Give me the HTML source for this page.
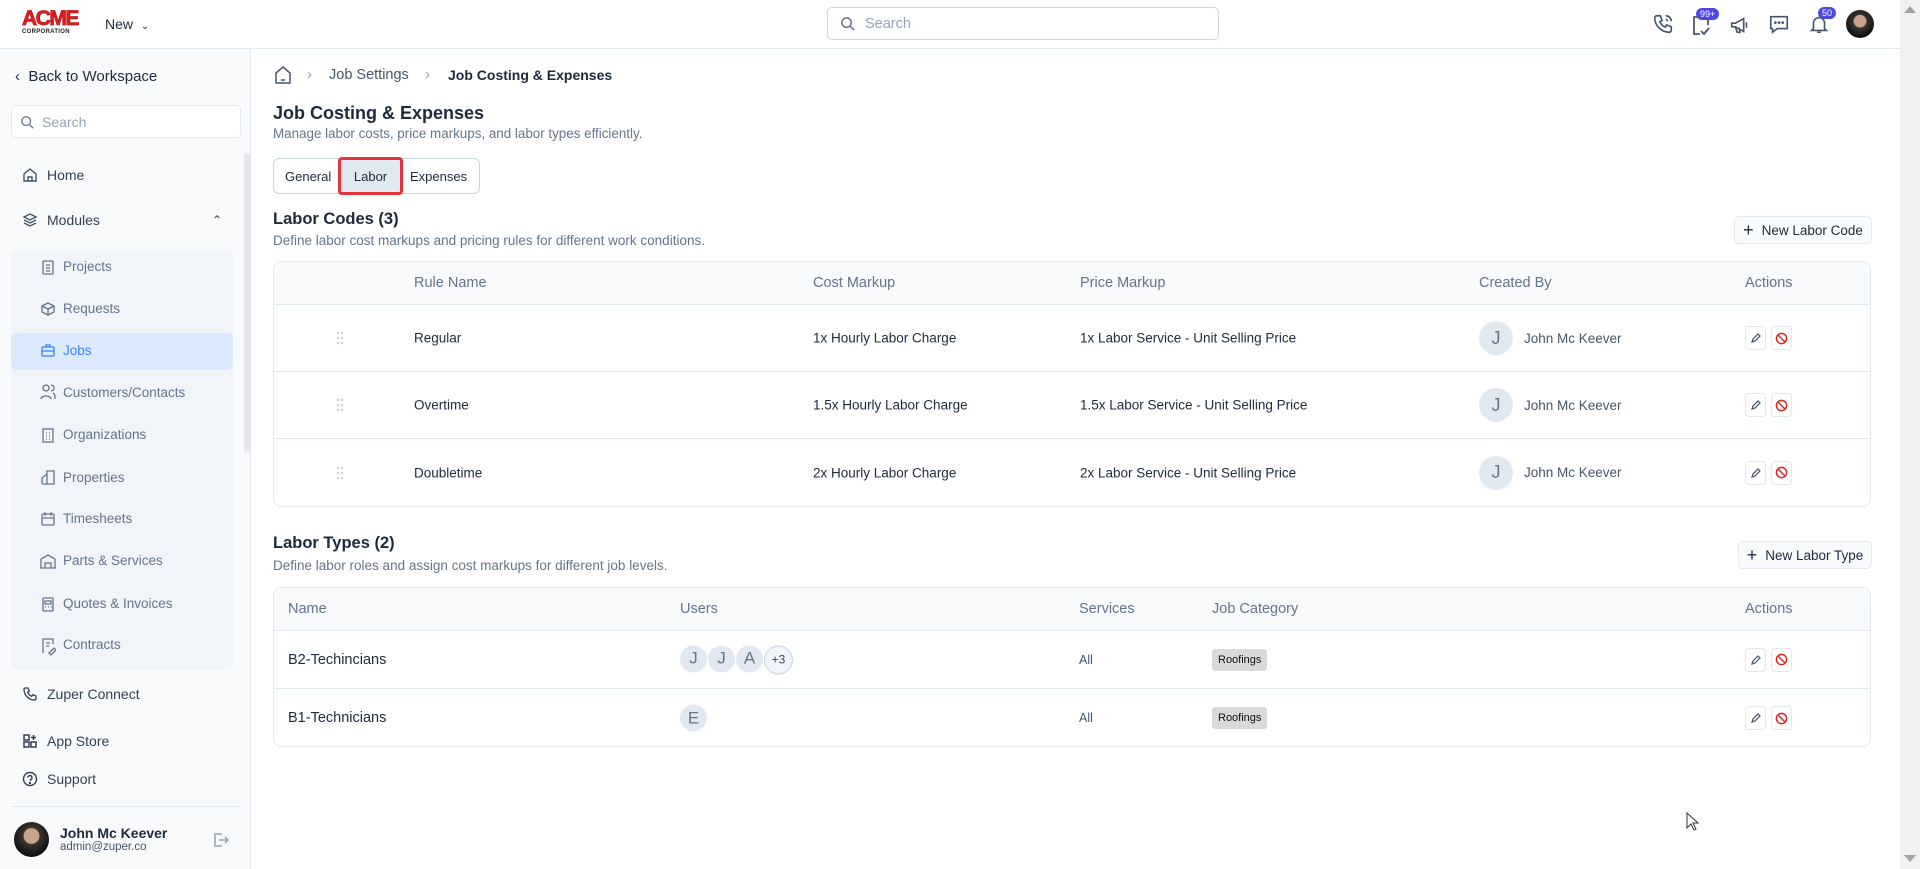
<!DOCTYPE html>
<html><head><meta charset="utf-8"><style>
*{box-sizing:border-box;margin:0;padding:0}
body{width:1920px;height:869px;overflow:hidden;font-family:"Liberation Sans",sans-serif;background:#fff;color:#1e293b;position:relative}
.a{position:absolute}
.top{left:0;top:0;width:1900px;height:49px;background:#fff;border-bottom:1px solid #e2e8f0}
.side{left:0;top:49px;width:251px;height:820px;background:#f8fafc;border-right:1px solid #e2e8f0}
.si{position:absolute;left:0;font-size:14px;color:#334155;display:flex;align-items:center}
.sub{position:absolute;font-size:13.5px;color:#64748b;left:63px}
svg{display:block}
.muted{color:#64748b}
.tbl{position:absolute;left:273px;width:1598px;border:1px solid #e2e8f0;border-radius:8px;overflow:hidden;background:#fff}
.th{background:#f8fafc;border-bottom:1px solid #e2e8f0;position:relative;color:#64748b;font-size:14.5px}
.tr{position:relative;border-bottom:1px solid #e2e8f0;font-size:13.5px;color:#1e293b}
.tr:last-child{border-bottom:none}
.c{position:absolute;top:50%;transform:translateY(-50%);white-space:nowrap}
.av{width:34px;height:34px;border-radius:50%;background:#e2e8f0;color:#64748b;font-size:18px;display:inline-flex;align-items:center;justify-content:center}
.ab{width:21px;height:24px;border:1px solid #e2e8f0;border-radius:4px;display:inline-flex;align-items:center;justify-content:center;background:#fff;margin-right:5px}
.btn{position:absolute;border:1px solid #e2e8f0;border-radius:5px;background:#f8fafc;font-size:13.5px;color:#1e293b;display:flex;align-items:center;justify-content:center;gap:8px}
.tag{background:#d9d9d9;border-radius:3px;padding:5px 6px;font-size:11px;color:#111}
</style></head><body>
<div class="a top"></div>
<div class="a" style="left:22px;top:9px;font:900 21px 'Liberation Sans';color:#e11d1d;letter-spacing:-1.5px;line-height:20px;-webkit-text-stroke:.8px #b91c1c">ACME</div>
<div class="a" style="left:22px;top:29px;font:bold 6px 'Liberation Sans';color:#222;letter-spacing:.3px">CORPORATION</div>
<div class="a" style="left:105px;top:16px;font-size:14px;color:#1e293b">New &nbsp;<span style="font-size:10px">&#8964;</span></div>
<div class="a" style="left:827px;top:7px;width:392px;height:33px;border:1px solid #cbd5e1;border-radius:5px;display:flex;align-items:center;padding-left:12px;gap:10px;color:#94a3b8;font-size:14.5px">
<svg width="15" height="15" viewBox="0 0 16 16" fill="none" stroke="#64748b" stroke-width="1.6"><circle cx="7" cy="7" r="5"/><path d="M11 11l4 4"/></svg>Search</div>
<svg class="a" style="left:1652px;top:13px" width="22" height="22" viewBox="0 0 24 24" fill="none" stroke="#475569" stroke-width="1.8"><path d="M5 3h4l2 5-2.5 1.5a11 11 0 0 0 6 6L16 13l5 2v4a2 2 0 0 1-2 2A16 16 0 0 1 3 5a2 2 0 0 1 2-2z"/><path d="M15 3a6 6 0 0 1 6 6M15 7a2 2 0 0 1 2 2"/></svg>
<svg class="a" style="left:1691px;top:14px" width="20" height="22" viewBox="0 0 20 22" fill="none" stroke="#475569" stroke-width="1.8"><path d="M6 3H3v17h6M14 3h3v8"/><path d="M10 17l3 3 5-6"/></svg>
<div class="a" style="left:1696px;top:8px;background:#4f46e5;color:#fff;font-size:9px;border-radius:8px;padding:1px 4px">99+</div>
<svg class="a" style="left:1729px;top:14px" width="22" height="22" viewBox="0 0 24 24" fill="none" stroke="#475569" stroke-width="1.8"><path d="M3 10v4h4l9 5V5L7 10z"/><path d="M7 14l2 6h3l-1-5M19 9v6"/></svg>
<svg class="a" style="left:1768px;top:13px" width="22" height="22" viewBox="0 0 24 24" fill="none" stroke="#475569" stroke-width="1.8"><path d="M3 4h18v13H10l-5 4v-4H3z"/><circle cx="8" cy="10.5" r=".6" fill="#475569"/><circle cx="12" cy="10.5" r=".6" fill="#475569"/><circle cx="16" cy="10.5" r=".6" fill="#475569"/></svg>
<svg class="a" style="left:1808px;top:13px" width="22" height="22" viewBox="0 0 24 24" fill="none" stroke="#475569" stroke-width="1.8"><path d="M6 17V11a6 6 0 0 1 12 0v6l2 2H4z"/><path d="M10 21h4"/></svg>
<div class="a" style="left:1818px;top:7px;background:#4f46e5;color:#fff;font-size:9px;border-radius:8px;padding:1px 4px">50</div>
<div class="a" style="left:1846px;top:10px;width:28px;height:28px;border-radius:50%;background:radial-gradient(circle at 50% 40%,#c9a48a 0 28%,#3a3430 30%,#111 70%)"></div>
<div class="a" style="left:1900px;top:0;width:20px;height:869px;background:#f1f1f1"></div>
<div class="a" style="left:1904px;top:6px;border-left:6px solid transparent;border-right:6px solid transparent;border-bottom:7px solid #a3a3a3"></div>
<div class="a" style="left:1904px;top:855px;border-left:6px solid transparent;border-right:6px solid transparent;border-top:7px solid #a3a3a3"></div>

<div class="a side"></div>
<div class="si" style="left:15px;top:68px;font-size:15px;color:#1e293b">&#8249;&nbsp;&nbsp;Back to Workspace</div>
<div class="a" style="left:11px;top:105px;width:230px;height:33px;background:#fff;border:1px solid #e2e8f0;border-radius:5px;display:flex;align-items:center;padding-left:8px;gap:8px;color:#94a3b8;font-size:14px"><svg width="14" height="14" viewBox="0 0 16 16" fill="none" stroke="#64748b" stroke-width="1.5"><circle cx="7" cy="7" r="5"/><path d="M11 11l4 4"/></svg>Search</div>
<div class="a" style="left:244px;top:153px;width:6px;height:300px;background:#e5e7eb;border-radius:3px"></div>
<div class="si" style="left:22px;top:167px;gap:9px"><svg width="16" height="16" viewBox="0 0 16 16" fill="none" stroke="#475569" stroke-width="1.4"><path d="M2 7l6-5 6 5v7H2z"/><path d="M6 14V10h4v4"/></svg>Home</div>
<div class="si" style="left:22px;top:212px;gap:9px;width:200px"><svg width="16" height="16" viewBox="0 0 16 16" fill="none" stroke="#475569" stroke-width="1.4"><path d="M8 2l6 3-6 3-6-3z M2 8l6 3 6-3 M2 11l6 3 6-3"/></svg>Modules<span style="margin-left:auto;font-size:12px">&#8963;</span></div>
<div class="a" style="left:11px;top:249px;width:222px;height:421px;background:#f1f5f9;border-radius:6px"></div>
<div class="a" style="left:11px;top:333px;width:222px;height:37px;background:#dbeafe;border-radius:6px"></div>
<div class="sub" style="top:259px">Projects</div>
<div class="sub" style="top:301px">Requests</div>
<div class="sub" style="top:343px;color:#3b82f6">Jobs</div>
<div class="sub" style="top:385px">Customers/Contacts</div>
<div class="sub" style="top:427px">Organizations</div>
<div class="sub" style="top:470px">Properties</div>
<div class="sub" style="top:511px">Timesheets</div>
<div class="sub" style="top:553px">Parts &amp; Services</div>
<div class="sub" style="top:596px">Quotes &amp; Invoices</div>
<div class="sub" style="top:637px">Contracts</div>
<svg class="a" style="left:40px;top:259px" width="16" height="400" viewBox="0 0 16 400" fill="none" stroke="#64748b" stroke-width="1.3">
<rect x="3" y="2" width="10" height="13" rx="1"/><path d="M6 6h4M6 9h4M6 12h4"/>
<path d="M2 47l6-3 6 3v6l-6 3-6-3z M2 47l6 3 6-3 M8 50v6"/>
<rect x="2" y="88" width="12" height="9" rx="1" stroke="#3b82f6"/><path d="M6 88v-2h4v2 M2 92h12" stroke="#3b82f6"/>
<circle cx="6" cy="129" r="3"/><path d="M1 140c0-4 10-4 10 0 M11 126a3 3 0 0 1 0 6 M13 134c2 1 2 3 2 6"/>
<rect x="3" y="170" width="10" height="13"/><path d="M6 174h1M9 174h1M6 177h1M9 177h1M6 180h1M9 180h1"/>
<path d="M2 225v-6l5-4v10 M7 225V212h7v13z M2 225h12"/>
<rect x="2" y="255" width="12" height="11" rx="1"/><path d="M5 253v4M11 253v4M2 259h12"/>
<path d="M1 309v-9l7-4 7 4v9z M5 309v-5h6v5"/>
<rect x="3" y="339" width="10" height="13" rx="1"/><path d="M5 342h6v3H5z M5 348h1M8 348h1M11 348h1"/>
<path d="M3 394V380h10v5 M6 384h4M6 387h3 M9 394l5-5 2 2-5 5z"/>
</svg>
<div class="si" style="left:22px;top:686px;gap:9px"><svg width="16" height="16" viewBox="0 0 24 24" fill="none" stroke="#334155" stroke-width="2"><path d="M5 3h4l2 5-2.5 1.5a11 11 0 0 0 6 6L16 13l5 2v4a2 2 0 0 1-2 2A16 16 0 0 1 3 5a2 2 0 0 1 2-2z"/></svg>Zuper Connect</div>
<div class="si" style="left:22px;top:733px;gap:9px"><svg width="16" height="16" viewBox="0 0 16 16" fill="none" stroke="#334155" stroke-width="1.5"><rect x="2" y="2" width="5" height="5"/><rect x="2" y="9" width="5" height="5"/><rect x="9" y="9" width="5" height="5"/><path d="M11.5 2v5M9 4.5h5"/></svg>App Store</div>
<div class="si" style="left:22px;top:771px;gap:9px"><svg width="16" height="16" viewBox="0 0 16 16" fill="none" stroke="#334155" stroke-width="1.4"><circle cx="8" cy="8" r="6.5"/><path d="M6 6.5a2 2 0 1 1 2.5 2V10"/><circle cx="8" cy="12" r=".5"/></svg>Support</div>
<div class="a" style="left:11px;top:806px;width:230px;border-top:1px solid #e2e8f0"></div>
<div class="a" style="left:14px;top:822px;width:35px;height:35px;border-radius:50%;background:radial-gradient(circle at 50% 40%,#c9a48a 0 28%,#3a3430 30%,#111 70%)"></div>
<div class="a" style="left:60px;top:825px;font-size:14px;font-weight:bold;color:#1e293b">John Mc Keever</div>
<div class="a" style="left:60px;top:841px;font-size:11.5px;color:#475569">admin@zuper.co</div>
<svg class="a" style="left:212px;top:831px" width="18" height="18" viewBox="0 0 18 18" fill="none" stroke="#94a3b8" stroke-width="1.6"><path d="M10 3H3v12h7 M7 9h9 M13 6l3 3-3 3"/></svg>

<svg class="a" style="left:274px;top:65px" width="18" height="20" viewBox="0 0 18 20" fill="none" stroke="#475569" stroke-width="1.5"><path d="M2 8l7-6 7 6v10H2z"/><path d="M7 15h4"/></svg>
<div class="a" style="left:307px;top:66px;font-size:15px;color:#94a3b8">&#8250;</div>
<div class="a" style="left:329px;top:67px;font-size:14.5px;color:#475569">Job Settings</div>
<div class="a" style="left:425px;top:66px;font-size:15px;color:#94a3b8">&#8250;</div>
<div class="a" style="left:448px;top:67px;font-size:14px;color:#1e293b;font-weight:bold">Job Costing &amp; Expenses</div>
<div class="a" style="left:273px;top:103px;font-size:18px;color:#1e293b;font-weight:bold">Job Costing &amp; Expenses</div>
<div class="a" style="left:273px;top:126px;font-size:13.4px"><span class="muted">Manage labor costs, price markups, and labor types efficiently.</span></div>
<div class="a" style="left:273px;top:158px;width:207px;height:36px;border:1px solid #cbd5e1;border-radius:6px"></div>
<div class="a" style="left:285px;top:169px;font-size:13px">General</div>
<div class="a" style="left:338px;top:157px;width:65px;height:38px;background:#e2e8f0;border:3px solid #e3343a;border-radius:4px;font-size:13px;display:flex;align-items:center;justify-content:center">Labor</div>
<div class="a" style="left:410px;top:169px;font-size:13px">Expenses</div>

<div class="a" style="left:273px;top:210px;font-size:16.5px;font-weight:bold">Labor Codes (3)</div>
<div class="a" style="left:273px;top:233px;font-size:13.5px;color:#64748b">Define labor cost markups and pricing rules for different work conditions.</div>
<div class="btn" style="left:1734px;top:216px;width:138px;height:28px"><span style="font-size:18px;font-weight:300">+</span>New Labor Code</div>

<div class="tbl" style="top:261px;height:246px">
<div class="th" style="height:43px"><span class="c" style="left:140px">Rule Name</span><span class="c" style="left:539px">Cost Markup</span><span class="c" style="left:806px">Price Markup</span><span class="c" style="left:1205px">Created By</span><span class="c" style="left:1471px">Actions</span></div>
<div class="tr" style="height:67px"><svg class="c" style="left:62px" width="8" height="14" viewBox="0 0 8 14" fill="#cbd5e1"><circle cx="2" cy="2" r="1.3"/><circle cx="6" cy="2" r="1.3"/><circle cx="2" cy="7" r="1.3"/><circle cx="6" cy="7" r="1.3"/><circle cx="2" cy="12" r="1.3"/><circle cx="6" cy="12" r="1.3"/></svg><span class="c" style="left:140px">Regular</span><span class="c" style="left:539px">1x Hourly Labor Charge</span><span class="c" style="left:806px">1x Labor Service - Unit Selling Price</span><span class="c" style="left:1205px;display:flex;align-items:center;gap:11px"><span class="av">J</span><span style="color:#475569">John Mc Keever</span></span><span class="c" style="left:1471px;display:flex"><span class="ab"><svg width="12" height="12" viewBox="0 0 12 12" fill="none" stroke="#475569" stroke-width="1.2"><path d="M2 10l1-3 5-5 2 2-5 5z"/></svg></span><span class="ab"><svg width="13" height="13" viewBox="0 0 14 14" fill="none" stroke="#dc2626" stroke-width="1.6"><circle cx="7" cy="7" r="5.5"/><path d="M3 3l8 8"/></svg></span></span></div>
<div class="tr" style="height:67px"><svg class="c" style="left:62px" width="8" height="14" viewBox="0 0 8 14" fill="#cbd5e1"><circle cx="2" cy="2" r="1.3"/><circle cx="6" cy="2" r="1.3"/><circle cx="2" cy="7" r="1.3"/><circle cx="6" cy="7" r="1.3"/><circle cx="2" cy="12" r="1.3"/><circle cx="6" cy="12" r="1.3"/></svg><span class="c" style="left:140px">Overtime</span><span class="c" style="left:539px">1.5x Hourly Labor Charge</span><span class="c" style="left:806px">1.5x Labor Service - Unit Selling Price</span><span class="c" style="left:1205px;display:flex;align-items:center;gap:11px"><span class="av">J</span><span style="color:#475569">John Mc Keever</span></span><span class="c" style="left:1471px;display:flex"><span class="ab"><svg width="12" height="12" viewBox="0 0 12 12" fill="none" stroke="#475569" stroke-width="1.2"><path d="M2 10l1-3 5-5 2 2-5 5z"/></svg></span><span class="ab"><svg width="13" height="13" viewBox="0 0 14 14" fill="none" stroke="#dc2626" stroke-width="1.6"><circle cx="7" cy="7" r="5.5"/><path d="M3 3l8 8"/></svg></span></span></div>
<div class="tr" style="height:67px"><svg class="c" style="left:62px" width="8" height="14" viewBox="0 0 8 14" fill="#cbd5e1"><circle cx="2" cy="2" r="1.3"/><circle cx="6" cy="2" r="1.3"/><circle cx="2" cy="7" r="1.3"/><circle cx="6" cy="7" r="1.3"/><circle cx="2" cy="12" r="1.3"/><circle cx="6" cy="12" r="1.3"/></svg><span class="c" style="left:140px">Doubletime</span><span class="c" style="left:539px">2x Hourly Labor Charge</span><span class="c" style="left:806px">2x Labor Service - Unit Selling Price</span><span class="c" style="left:1205px;display:flex;align-items:center;gap:11px"><span class="av">J</span><span style="color:#475569">John Mc Keever</span></span><span class="c" style="left:1471px;display:flex"><span class="ab"><svg width="12" height="12" viewBox="0 0 12 12" fill="none" stroke="#475569" stroke-width="1.2"><path d="M2 10l1-3 5-5 2 2-5 5z"/></svg></span><span class="ab"><svg width="13" height="13" viewBox="0 0 14 14" fill="none" stroke="#dc2626" stroke-width="1.6"><circle cx="7" cy="7" r="5.5"/><path d="M3 3l8 8"/></svg></span></span></div>
</div>

<div class="a" style="left:273px;top:534px;font-size:16.5px;font-weight:bold">Labor Types (2)</div>
<div class="a" style="left:273px;top:558px;font-size:13.5px;color:#64748b">Define labor roles and assign cost markups for different job levels.</div>
<div class="btn" style="left:1738px;top:541px;width:134px;height:28px"><span style="font-size:18px;font-weight:300">+</span>New Labor Type</div>

<div class="tbl" style="top:587px;height:160px">
<div class="th" style="height:43px"><span class="c" style="left:14px">Name</span><span class="c" style="left:406px">Users</span><span class="c" style="left:805px">Services</span><span class="c" style="left:938px">Job Category</span><span class="c" style="left:1471px">Actions</span></div>
<div class="tr" style="height:58px;font-size:14.5px"><span class="c" style="left:14px">B2-Techincians</span><span class="c" style="left:406px;display:flex;gap:1px"><span class="av" style="width:27px;height:27px;font-size:17px">J</span><span class="av" style="width:27px;height:27px;font-size:17px">J</span><span class="av" style="width:27px;height:27px;font-size:17px">A</span><span class="av" style="width:29px;height:29px;font-size:12px;background:#f1f5f9;border:1px solid #cbd5e1;color:#334155">+3</span></span><span class="c" style="left:805px;font-size:12.5px;color:#475569">All</span><span class="c tag" style="left:938px">Roofings</span><span class="c" style="left:1471px;display:flex"><span class="ab"><svg width="12" height="12" viewBox="0 0 12 12" fill="none" stroke="#475569" stroke-width="1.2"><path d="M2 10l1-3 5-5 2 2-5 5z"/></svg></span><span class="ab"><svg width="13" height="13" viewBox="0 0 14 14" fill="none" stroke="#dc2626" stroke-width="1.6"><circle cx="7" cy="7" r="5.5"/><path d="M3 3l8 8"/></svg></span></span></div>
<div class="tr" style="height:58px;font-size:14.5px"><span class="c" style="left:14px">B1-Technicians</span><span class="c" style="left:406px"><span class="av" style="width:27px;height:27px;font-size:17px">E</span></span><span class="c" style="left:805px;font-size:12.5px;color:#475569">All</span><span class="c tag" style="left:938px">Roofings</span><span class="c" style="left:1471px;display:flex"><span class="ab"><svg width="12" height="12" viewBox="0 0 12 12" fill="none" stroke="#475569" stroke-width="1.2"><path d="M2 10l1-3 5-5 2 2-5 5z"/></svg></span><span class="ab"><svg width="13" height="13" viewBox="0 0 14 14" fill="none" stroke="#dc2626" stroke-width="1.6"><circle cx="7" cy="7" r="5.5"/><path d="M3 3l8 8"/></svg></span></span></div>
</div>
<svg class="a" style="left:1686px;top:812px" width="14" height="20" viewBox="0 0 14 20" fill="#fff" stroke="#333" stroke-width="1"><path d="M1 1v15l4-4 3 6 2-1-3-6h5z"/></svg>
</body></html>
